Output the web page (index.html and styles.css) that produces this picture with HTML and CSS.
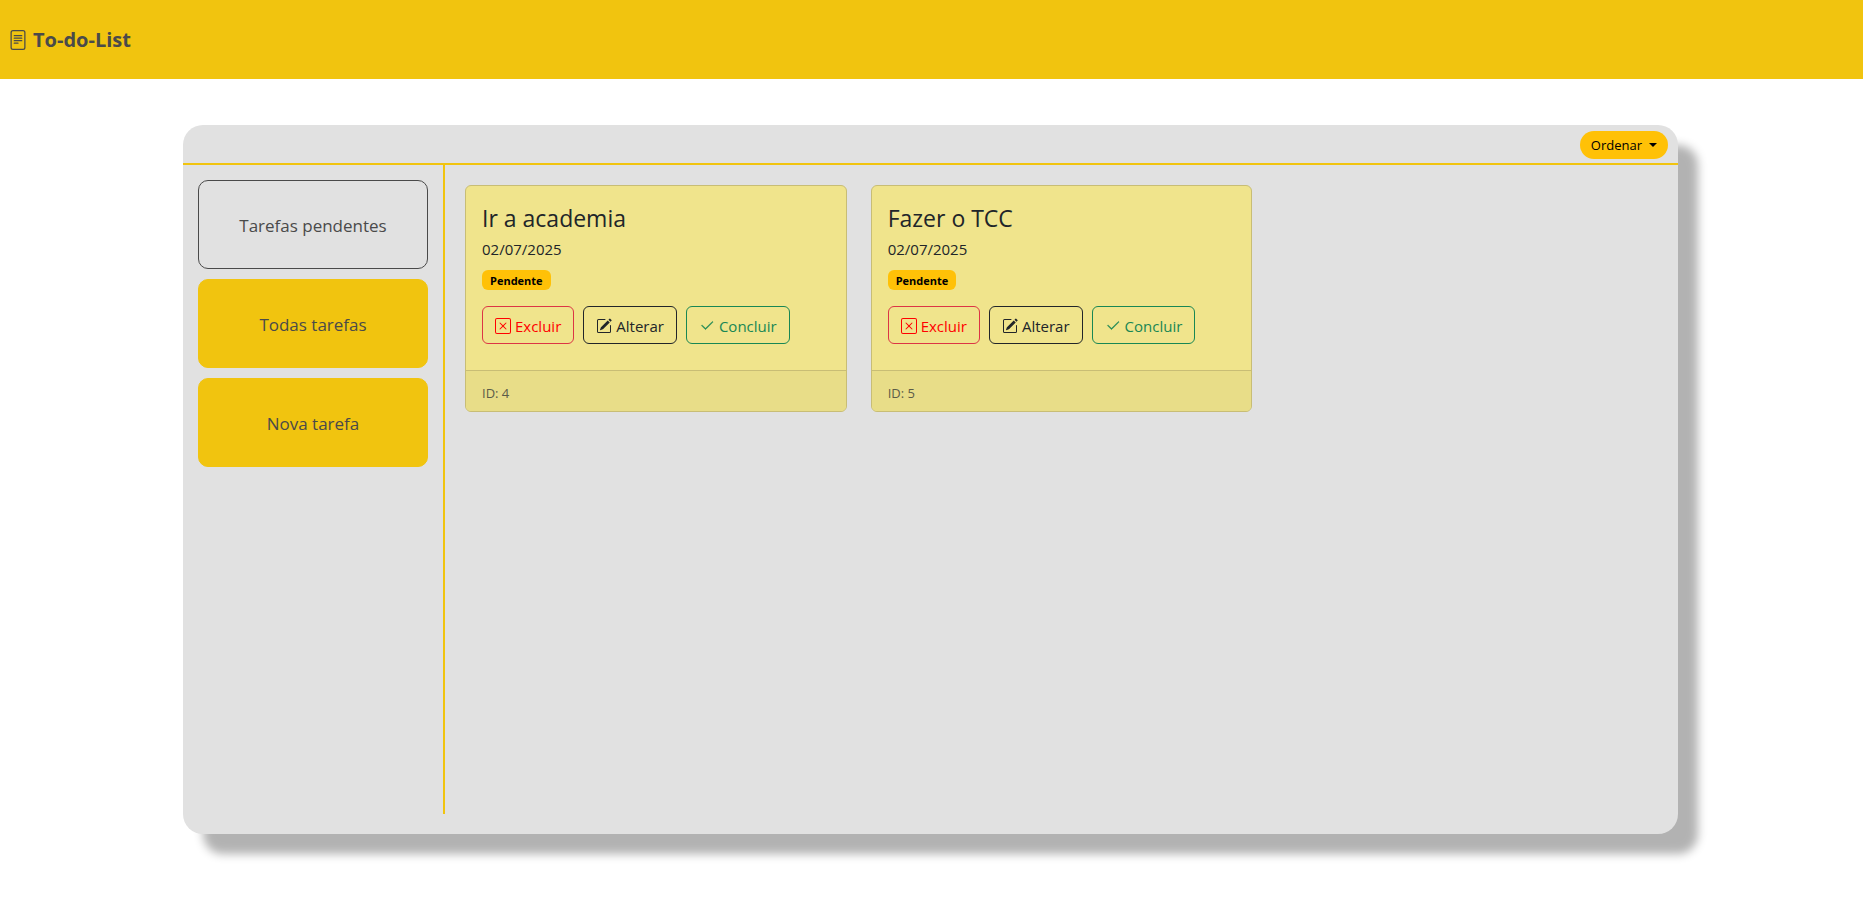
FILE: index.html
```html
<!DOCTYPE html>
<html lang="pt-br">
<head>
<meta charset="utf-8">
<meta name="viewport" content="width=device-width, initial-scale=1">
<title>To-do-List</title>
<link rel="stylesheet" href="styles.css">
</head>
<body>
<svg class="sprite" aria-hidden="true">
  <symbol id="file" viewBox="0 0 16 16">
    <path d="M5 4a.5.5 0 0 0 0 1h6a.5.5 0 0 0 0-1zm-.5 2.5A.5.5 0 0 1 5 6h6a.5.5 0 0 1 0 1H5a.5.5 0 0 1-.5-.5M5 8a.5.5 0 0 0 0 1h6a.5.5 0 0 0 0-1zm0 2a.5.5 0 0 0 0 1h3a.5.5 0 0 0 0-1z"/>
    <path d="M2 2a2 2 0 0 1 2-2h8a2 2 0 0 1 2 2v12a2 2 0 0 1-2 2H4a2 2 0 0 1-2-2zm10-1H4a1 1 0 0 0-1 1v12a1 1 0 0 0 1 1h8a1 1 0 0 0 1-1V2a1 1 0 0 0-1-1"/>
  </symbol>
  <symbol id="x-square" viewBox="0 0 16 16">
    <path d="M14 1a1 1 0 0 1 1 1v12a1 1 0 0 1-1 1H2a1 1 0 0 1-1-1V2a1 1 0 0 1 1-1zM2 0a2 2 0 0 0-2 2v12a2 2 0 0 0 2 2h12a2 2 0 0 0 2-2V2a2 2 0 0 0-2-2z"/>
    <path d="M4.646 4.646a.5.5 0 0 1 .708 0L8 7.293l2.646-2.647a.5.5 0 0 1 .708.708L8.707 8l2.647 2.646a.5.5 0 0 1-.708.708L8 8.707l-2.646 2.647a.5.5 0 0 1-.708-.708L7.293 8 4.646 5.354a.5.5 0 0 1 0-.708"/>
  </symbol>
  <symbol id="pencil" viewBox="0 0 16 16">
    <path d="M15.502 1.94a.5.5 0 0 1 0 .706L14.459 3.69l-2-2L13.502.646a.5.5 0 0 1 .707 0l1.293 1.293zm-1.75 2.456-2-2L4.939 9.21a.5.5 0 0 0-.121.196l-.805 2.414a.25.25 0 0 0 .316.316l2.414-.805a.5.5 0 0 0 .196-.12l6.813-6.814z"/>
    <path fill-rule="evenodd" d="M1 13.5A1.5 1.5 0 0 0 2.5 15h11a1.5 1.5 0 0 0 1.5-1.5v-6a.5.5 0 0 0-1 0v6a.5.5 0 0 1-.5.5h-11a.5.5 0 0 1-.5-.5v-11a.5.5 0 0 1 .5-.5H9a.5.5 0 0 0 0-1H2.5A1.5 1.5 0 0 0 1 2.5z"/>
  </symbol>
  <symbol id="check" viewBox="0 0 16 16">
    <path stroke="currentColor" stroke-width=".4" d="M13.854 3.646a.5.5 0 0 1 0 .708l-7 7a.5.5 0 0 1-.708 0l-3.5-3.5a.5.5 0 1 1 .708-.708L6.5 10.293l6.646-6.647a.5.5 0 0 1 .708 0"/>
  </symbol>
</svg>

<header class="header">
  <svg class="brand-icon" aria-hidden="true"><use href="#file"/></svg>
  <h1 class="brand">To-do-List</h1>
</header>

<main class="panel">
  <div class="toolbar">
    <button class="sort" type="button">Ordenar<span class="caret"></span></button>
  </div>
  <div class="content">
    <nav class="sidebar">
      <button class="nav-btn nav-btn-active" type="button">Tarefas pendentes</button>
      <button class="nav-btn" type="button">Todas tarefas</button>
      <button class="nav-btn" type="button">Nova tarefa</button>
    </nav>
    <section class="tasks">
      <article class="card">
        <div class="card-body">
          <h2 class="card-title">Ir a academia</h2>
          <p class="card-date">02/07/2025</p>
          <span class="badge">Pendente</span>
          <div class="actions">
            <button class="btn btn-delete" type="button"><svg class="icon" aria-hidden="true"><use href="#x-square"/></svg>Excluir</button>
            <button class="btn btn-edit" type="button"><svg class="icon" aria-hidden="true"><use href="#pencil"/></svg>Alterar</button>
            <button class="btn btn-done" type="button"><svg class="icon" aria-hidden="true"><use href="#check"/></svg>Concluir</button>
          </div>
        </div>
        <footer class="card-footer">ID: 4</footer>
      </article>
      <article class="card">
        <div class="card-body">
          <h2 class="card-title">Fazer o TCC</h2>
          <p class="card-date">02/07/2025</p>
          <span class="badge">Pendente</span>
          <div class="actions">
            <button class="btn btn-delete" type="button"><svg class="icon" aria-hidden="true"><use href="#x-square"/></svg>Excluir</button>
            <button class="btn btn-edit" type="button"><svg class="icon" aria-hidden="true"><use href="#pencil"/></svg>Alterar</button>
            <button class="btn btn-done" type="button"><svg class="icon" aria-hidden="true"><use href="#check"/></svg>Concluir</button>
          </div>
        </div>
        <footer class="card-footer">ID: 5</footer>
      </article>
    </section>
  </div>
</main>
</body>
</html>
```
FILE: styles.css
```css
* {
  box-sizing: border-box;
}

body {
  display: flex;
  flex-direction: column;
  min-height: 100vh;
  margin: 0;
  background: #fff;
  color: #212529;
  font-family: "Segoe UI", "Open Sans", "Noto Sans", sans-serif;
  font-size: 15px;
  line-height: 24px;
}

button {
  font-family: inherit;
  cursor: pointer;
}

svg {
  fill: currentColor;
}

.sprite {
  display: none;
}

.header {
  display: flex;
  align-items: center;
  gap: 5px;
  padding: 25px 8px 24px;
  background: #f1c40f;
  color: #4a4a4a;
}

.brand-icon {
  width: 20px;
  height: 20px;
}

.brand {
  margin: 0;
  font-size: 20px;
  font-weight: 700;
  line-height: 30px;
}

.panel {
  display: flex;
  flex: 1;
  flex-direction: column;
  margin: 46px 185px 90px 183px;
  padding-bottom: 20px;
  border-radius: 20px;
  background: #e1e1e1;
  box-shadow: 20px 20px 10px rgba(0, 0, 0, 0.3);
}

.toolbar {
  display: flex;
  justify-content: flex-end;
  padding: 6px 10px 4px;
  border-bottom: 2px solid #f1c40f;
}

.sort {
  display: flex;
  align-items: center;
  gap: 7px;
  padding: 4px 11px;
  border: 0;
  border-radius: 14px;
  background: #ffc107;
  color: #000;
  font-size: 13px;
  line-height: 20px;
}

.caret {
  border-top: 4px solid;
  border-right: 4px solid transparent;
  border-left: 4px solid transparent;
}

.content {
  display: flex;
  flex: 1;
}

.sidebar {
  display: flex;
  flex: 0 0 262px;
  flex-direction: column;
  gap: 10px;
  padding: 15px;
  border-right: 2px solid #f1c40f;
}

.nav-btn {
  padding: 32px 12px 30px;
  border: 1px solid #f1c40f;
  border-radius: 10px;
  background: #f1c40f;
  color: #4a4a4a;
  font-size: 17px;
  line-height: 25px;
}

.nav-btn-active {
  border-color: #4a4a4a;
  background: transparent;
}

.tasks {
  display: grid;
  flex: 1;
  grid-template-columns: repeat(3, 1fr);
  gap: 24px;
  align-items: start;
  padding: 20px;
}

.card {
  border: 1px solid #c8bd75;
  border-radius: 6px;
  background: #f0e48c;
  overflow: hidden;
}

.card-body {
  padding: 17px 16px 26px;
}

.card-title {
  margin: 0;
  font-size: 23px;
  font-weight: 400;
  line-height: 30px;
}

.card-date {
  margin: 4px 0 9px;
}

.badge {
  display: block;
  width: fit-content;
  padding: 5px 8px 3px;
  border-radius: 6px;
  background: #ffc107;
  color: #000;
  font-size: 11px;
  font-weight: 700;
  line-height: 12px;
}

.actions {
  display: flex;
  flex-wrap: wrap;
  gap: 9px;
  margin-top: 16px;
}

.btn {
  display: flex;
  align-items: center;
  gap: 4px;
  padding: 7px 12px 5px;
  border: 1px solid;
  border-radius: 6px;
  background: transparent;
  font-size: 15px;
  line-height: 24px;
}

.btn-delete {
  border-color: #dc3545;
  color: #f00;
}

.btn-edit {
  color: #212529;
}

.btn-done {
  color: #198754;
}

.icon {
  width: 16px;
  height: 16px;
}

.card-footer {
  padding: 12px 16px 7px;
  border-top: 1px solid #c8bd75;
  background: #e8dd88;
  color: #5c5c48;
  font-size: 13px;
  line-height: 21px;
}
```
